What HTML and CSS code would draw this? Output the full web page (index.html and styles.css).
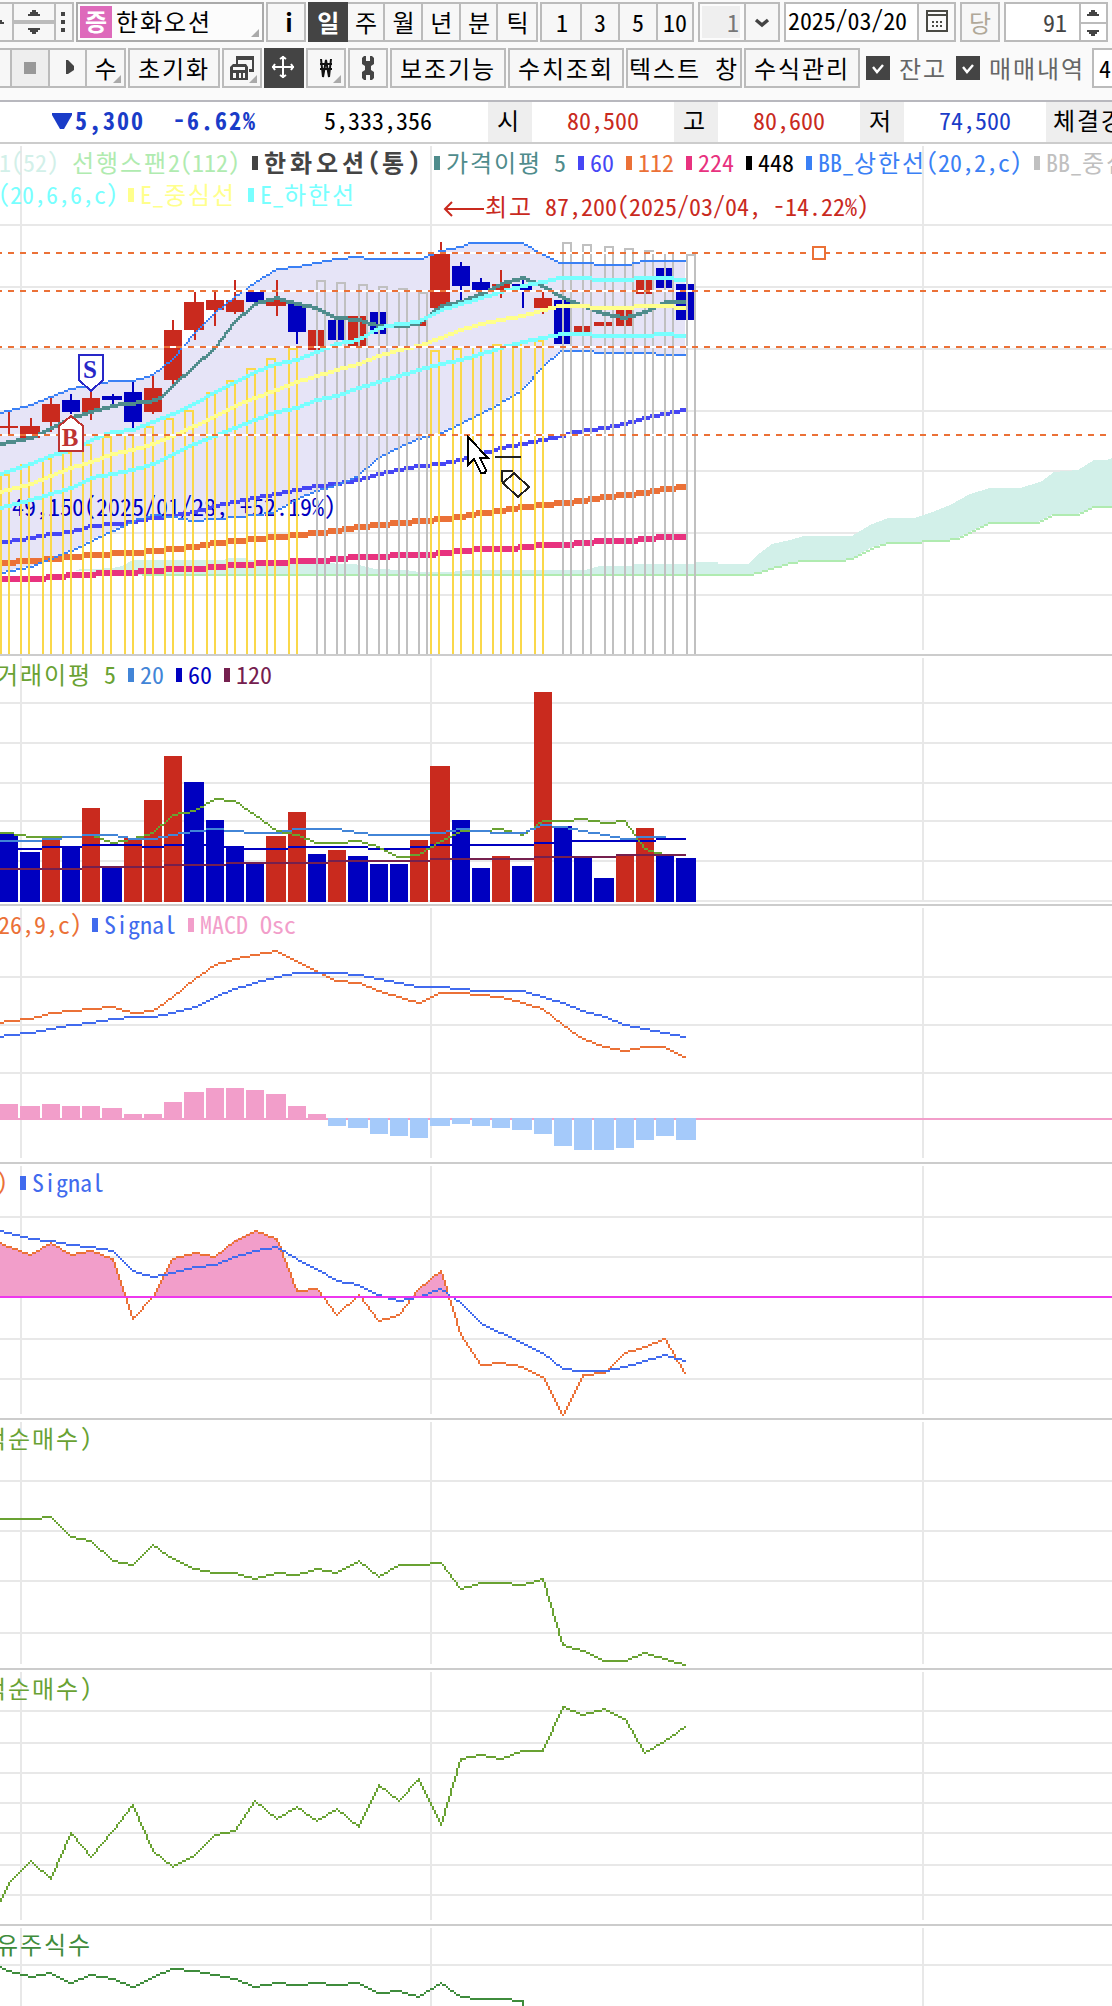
FILE: index.html
```html
<!DOCTYPE html>
<html lang="ko">
<head>
<meta charset="utf-8">
<title>한화오션 차트</title>
<link rel="stylesheet" href="styles.css">
</head>
<body>
<header class="tools">
  <div class="bar bar-top">
    <div class="group g-edge"><span class="cell"><svg width="12" height="36" viewBox="0 0 12 36"><path class="ink" d="M0 16h2v2h2v2H0z"/></svg></span></div>
    <div class="group g-spin">
      <span class="cell stack"><svg width="40" height="36" viewBox="0 0 40 36"><path class="ink" d="M14 12h12v-2h-2V8h-2V6h-4v2h-2v2h-2zM14 24h12v2h-2v2h-2v2h-4v-2h-2v-2h-2z"/><path class="rule" d="M0 16h40v4H0z"/></svg></span>
      <span class="cell dots"><svg width="18" height="36" viewBox="0 0 18 36"><path class="ink" d="M6 8h4v4H6zM6 16h4v4H6zM6 24h4v4H6z"/></svg></span>
    </div>
    <div class="box stock"><b class="badge">증</b><span class="stock-name">한화오션</span><i class="corner"></i></div>
    <div class="group w40"><span class="cell info">i</span></div>
    <div class="group periods"><span class="cell on">일</span><span class="cell">주</span><span class="cell">월</span><span class="cell">년</span><span class="cell">분</span><span class="cell">틱</span></div>
    <div class="group minutes"><span class="cell">1</span><span class="cell">3</span><span class="cell">5</span><span class="cell">10</span></div>
    <div class="box unit"><span class="unit-value">1</span><span class="drop"><svg width="32" height="36" viewBox="0 0 32 36"><path d="M10 16l6 5 6-5" fill="none" stroke="#444" stroke-width="3.4"/></svg></span></div>
    <div class="box date"><span class="date-value">2025/03/20</span><span class="cal"><svg width="38" height="36" viewBox="0 0 38 36" fill="none" stroke="#4a4a44" stroke-width="2"><path d="M8 7h20v20H8zM8 11h20"/><path d="M13 18h12M13 22h12" stroke-dasharray="2 2"/></svg></span></div>
    <div class="group w40 off"><span class="cell">당</span></div>
    <div class="box count"><span class="count-value">91</span><span class="spin"><svg width="25" height="36" viewBox="0 0 25 36"><path class="ink" d="M6 12h12v-2h-2V8h-2V6h-4v2H8v2H6zM6 26h12v2h-2v2h-2v2h-4v-2H8v-2H6z"/><path class="rule" d="M0 18h25v2H0z"/></svg></span></div>
  </div>
  <div class="bar bar-bottom">
    <div class="group g-play">
      <span class="cell c-edge"></span>
      <span class="cell c-stop"><i class="stop"></i></span>
      <span class="cell c-go"><svg width="36" height="36" viewBox="0 0 36 36"><path class="ink" d="M16 10h2l6 6v4l-6 4h-2z"/></svg></span>
      <span class="cell c-num">수<i class="corner"></i></span>
    </div>
    <button class="btn b92">초기화</button>
    <button class="btn w40"><svg width="36" height="36" viewBox="0 0 36 36"><path class="ink" fill-rule="evenodd" d="M12 6h18v16h-5v-3h3v-9H14v4h-2zM9 14h13l2 3v13H6V17zM9 17v3h12v-3zM9 23v5h3v-5zM15 23v5h2v-5zM19 23v5h2v-5z"/></svg><i class="corner"></i></button>
    <button class="btn w40 on"><svg width="36" height="36" viewBox="0 0 36 36" fill="none" stroke="#fff" stroke-width="2"><path d="M17 6v22M6 17h22M14 9l3-2 3 2M14 25l3 2 3-2M9 14l-2 3 2 3M25 14l2 3-2 3"/></svg></button>
    <button class="btn w40"><svg width="36" height="36" viewBox="0 0 36 36" fill="none" stroke="#111" stroke-width="2"><path d="M13 9l2 18 3-17 3 17 2-18M12 14h12M12 19h12"/></svg><i class="corner"></i></button>
    <button class="btn w40"><svg width="36" height="36" viewBox="0 0 36 36"><path class="ink" d="M12 8l2-2h2v5h4V6h2l2 2v6l-3 2v4l3 2v6l-2 2h-2v-5h-4v5h-2l-2-2v-6l3-2v-4l-3-2z"/></svg></button>
    <button class="btn b116">보조기능</button>
    <button class="btn b116">수치조회</button>
    <button class="btn b116">텍스트 창</button>
    <button class="btn b116">수식관리</button>
    <label class="check c1"><svg width="24" height="24" viewBox="0 0 24 24"><path d="M0 0h24v24H0z" fill="#444"/><path d="M7 11l4 5 6-7" fill="none" stroke="#fff" stroke-width="2.4"/></svg>잔고</label>
    <label class="check c2"><svg width="24" height="24" viewBox="0 0 24 24"><path d="M0 0h24v24H0z" fill="#444"/><path d="M7 11l4 5 6-7" fill="none" stroke="#fff" stroke-width="2.4"/></svg>매매내역</label>
    <div class="box last">4</div>
  </div>
</header>

<section class="quote">
  <span class="q-diff"><svg width="20" height="16" viewBox="0 0 20 16"><path d="M0 0h20v2L12 16H8L0 2z" fill="#1a3cc8"/></svg><b>5,300</b></span>
  <b class="q-rate">-6.62%</b>
  <span class="q-vol">5,333,356</span>
  <span class="q-tag">시</span><span class="q-num up">80,500</span>
  <span class="q-tag">고</span><span class="q-num up">80,600</span>
  <span class="q-tag">저</span><span class="q-num down">74,500</span>
  <span class="q-tag q-wide">체결강</span>
</section>

<main class="charts">
  <svg class="panel" id="price" viewBox="0 144 1112 510" height="510">
    <g class="plot"></g>
    <g class="legend">
      <text x="-1" y="172" fill="#d2f0e9">1(52)</text>
      <text x="72" y="172" fill="#b0ebb0">선행스팬2(112)</text>
      <rect x="252" y="156" width="6" height="14" fill="#444"/><text class="strong" x="264" y="172" fill="#444">한화오션(통)</text>
      <rect x="434" y="156" width="6" height="14" fill="#4f8c8c"/><text x="446" y="172" fill="#4f8c8c">가격이평 5</text>
      <rect x="578" y="156" width="6" height="14" fill="#4646f5"/><text x="590" y="172" fill="#4646f5">60</text>
      <rect x="626" y="156" width="6" height="14" fill="#eb7137"/><text x="638" y="172" fill="#eb7137">112</text>
      <rect x="686" y="156" width="6" height="14" fill="#e8327f"/><text x="698" y="172" fill="#e8327f">224</text>
      <rect x="746" y="156" width="6" height="14" fill="#000"/><text x="758" y="172" fill="#000">448</text>
      <rect x="806" y="156" width="6" height="14" fill="#3a80f5"/><text x="818" y="172" fill="#3a80f5">BB_상한선(20,2,c)</text>
      <rect x="1034" y="156" width="6" height="14" fill="#c0c0c0"/><text x="1046" y="172" fill="#c0c0c0">BB_중심선</text>
      <text x="-2" y="204" fill="#78ffff">(20,6,6,c)</text>
      <rect x="128" y="188" width="6" height="14" fill="#ffff8c"/><text x="140" y="204" fill="#ffff8c">E_중심선</text>
      <rect x="248" y="188" width="6" height="14" fill="#78ffff"/><text x="260" y="204" fill="#78ffff">E_하한선</text>
      <path d="M484 209H445M452 202l-7 7 7 7" fill="none" stroke="#c92a1e" stroke-width="2"/>
      <text x="485" y="216" fill="#c92a1e">최고 87,200(2025/03/04, -14.22%)</text>
    </g>
  </svg>
  <svg class="panel" id="volume" viewBox="0 656 1112 248" height="248">
    <g class="plot"></g>
    <g class="legend">
      <text x="-4" y="684" fill="#69a232">거래이평 5</text>
      <rect x="128" y="668" width="6" height="14" fill="#4285d7"/><text x="140" y="684" fill="#4285d7">20</text>
      <rect x="176" y="668" width="6" height="14" fill="#0000c0"/><text x="188" y="684" fill="#0000c0">60</text>
      <rect x="224" y="668" width="6" height="14" fill="#75204f"/><text x="236" y="684" fill="#75204f">120</text>
    </g>
  </svg>
  <svg class="panel" id="macd" viewBox="0 906 1112 256" height="256">
    <g class="plot"></g>
    <g class="legend">
      <text x="-2" y="934" fill="#eb7137">26,9,c)</text>
      <rect x="92" y="918" width="6" height="14" fill="#416bee"/><text x="104" y="934" fill="#416bee">Signal</text>
      <rect x="188" y="918" width="6" height="14" fill="#f29eca"/><text x="200" y="934" fill="#f29eca">MACD Osc</text>
    </g>
  </svg>
  <svg class="panel" id="stoch" viewBox="0 1164 1112 254" height="254">
    <g class="plot"></g>
    <g class="legend">
      <text x="-4" y="1192" fill="#eb7137">)</text>
      <rect x="20" y="1176" width="6" height="14" fill="#416bee"/><text x="32" y="1192" fill="#416bee">Signal</text>
    </g>
  </svg>
  <svg class="panel" id="netbuy1" viewBox="0 1420 1112 248" height="248">
    <g class="plot"></g>
    <g class="legend"><text x="-16" y="1448" fill="#69a232">적순매수)</text></g>
  </svg>
  <svg class="panel" id="netbuy2" viewBox="0 1670 1112 254" height="254">
    <g class="plot"></g>
    <g class="legend"><text x="-16" y="1698" fill="#69a232">적순매수)</text></g>
  </svg>
  <svg class="panel" id="shares" viewBox="0 1926 1112 80" height="80">
    <g class="plot"></g>
    <g class="legend"><text x="-4" y="1954" fill="#3f8c3c">유주식수</text></g>
  </svg>
</main>
<script src="chart.js"></script>
</body>
</html>
```
FILE: styles.css
```css
* { box-sizing: border-box; }
body {
  margin: 0;
  width: 1112px;
  height: 2006px;
  overflow: hidden;
  background: #fff;
  color: #000;
  font: 24px/1 "Noto Sans Mono CJK KR", "Noto Sans CJK KR", monospace;
}
svg { display: block; flex: none; }
.ink { fill: #444; }
.rule { fill: #bbb; }

/* toolbars */
.tools { height: 102px; padding-top: 2px; background: #fafafa; border-bottom: 2px solid #b8b8be; }
.bar { display: flex; height: 40px; white-space: nowrap; }
.bar-bottom { margin-top: 6px; gap: 2px; }
.group, .box, .btn { flex: none; display: flex; height: 40px; background: #f7f7f7; border: 2px solid #bbb; }
.cell { display: flex; align-items: center; justify-content: center; position: relative; border-right: 2px solid #bbb; }
.cell:last-child { border-right: 0; }
.g-edge { width: 14px; border-left: 0; }
.g-edge .cell { width: 12px; }
.g-spin { width: 60px; border-left: 0; margin-right: 2px; }
.stack { width: 42px; }
.dots { width: 16px; }
.box { background: #fcfcfc; align-items: center; position: relative; }
.stock { width: 188px; border-color: #aaa; margin-right: 2px; padding-left: 2px; }
.badge { width: 32px; height: 32px; line-height: 30px; text-align: center; background: #de6abb; color: #fff; }
.stock-name { margin-left: 4px; line-height: 32px; padding-bottom: 2px; letter-spacing: 1.92px; }
.corner { position: absolute; right: 3px; bottom: 3px; border: 4px solid transparent; border-right-color: #aaa; border-bottom-color: #aaa; }
.w40 { width: 40px; }
.w40 .cell { width: 36px; }
.bar-top .w40 { margin-right: 2px; }
.info { font-weight: 700; padding-left: 6px; }
.periods { width: 230px; margin-right: 2px; border-left: 0; }
.periods .cell { width: 38px; padding-left: 1px; }
.periods .on { width: 40px; height: 40px; margin-top: -2px; background: #444; color: #fff; font-weight: 700; border-right: 0; }
.minutes { width: 154px; margin-right: 4px; padding-left: 2px; }
.minutes .cell { width: 38px; flex: none; }
.minutes .cell:last-child { width: 34px; }
.unit { width: 82px; margin-right: 4px; padding-left: 2px; }
.unit-value { width: 40px; height: 32px; line-height: 32px; background: #efefef; color: #777; text-align: right; padding-right: 1px; margin-right: 4px; }
.drop { border-left: 2px solid #bbb; background: #f7f7f7; }
.date { width: 172px; margin-right: 4px; background: #fff; }
.date-value { width: 131px; padding-left: 2px; padding-bottom: 4px; letter-spacing: -.1px; }
.cal { border-left: 2px solid #bbb; background: #fafafa; width: 37px; overflow: hidden; }
.bar-top .off { margin-right: 4px; color: #b0a898; }
.count { width: 104px; background: #fff; color: #444; }
.count-value { width: 75px; padding-right: 12px; text-align: right; }
.spin { border-left: 2px solid #bbb; }

.g-play { width: 126px; border-left: 0; }
.c-edge { width: 12px; }
.c-stop { width: 38px; background: #eee; }
.c-go { width: 37px; }
.c-num { width: 37px; }
.stop { width: 12px; height: 12px; background: #999; }
.btn { padding: 0; font: inherit; letter-spacing: 1.92px; color: #000; align-items: center; justify-content: center; position: relative; border-radius: 0; }
.btn.on { background: #444; border-color: #444; }
.b92 { width: 92px; }
.b116 { width: 116px; }
.check { flex: none; display: flex; align-items: center; gap: 9px; height: 40px; color: #666; letter-spacing: 1.92px; }
.c1 { width: 88px; margin-left: 4px; }
.c2 { width: 134px; }
.last { width: 40px; padding-left: 5px; background: #fff; }

/* quote line */
.quote { display: flex; height: 42px; border-bottom: 2px solid #ccc; line-height: 36px; white-space: nowrap; overflow: hidden; }
.quote > * { flex: none; }
.q-diff, .q-rate { color: #1a3cc8; letter-spacing: 2px; }
.q-diff { width: 173px; padding-left: 52px; display: flex; gap: 3px; }
.q-diff svg { margin-top: 11px; }
.q-rate { width: 151px; }
.q-vol { width: 164px; }
.q-tag { width: 44px; height: 40px; padding-right: 4px; text-align: center; background: #eee; }
.q-num { width: 142px; padding-right: 35px; text-align: right; }
.q-wide { width: 100px; padding-left: 7px; text-align: left; letter-spacing: 1.92px; }
.up { color: #c92a1e; }
.down { color: #1a3cc8; }

/* charts */
.panel { width: 1112px; border-bottom: 2px solid #ccc; box-sizing: content-box; }
.panel:last-child { border-bottom: 0; }
.plot { shape-rendering: crispEdges; }
.legend text, .note { white-space: pre; }
.ko { letter-spacing: 1.92px; }
.strong { font-weight: 700; letter-spacing: 2px; }
.strong .ko { letter-spacing: 3.92px; }
.mark { font: 700 25px "Liberation Serif", serif; text-anchor: middle; }
```
FILE: chart.js
```js
const RED = '#c92a1e', NAVY = '#0000c0', ORANGE = '#eb7137', GREEN = '#69a232';
const left = [-2, 20, 42, 62, 82, 102, 124, 144, 164, 184, 206, 226, 246, 266, 288, 308, 328, 348, 370, 390, 410, 430,
  452, 472, 492, 512, 534, 554, 574, 594, 616, 636, 656, 676, 698];
const barW = i => left[i + 1] - left[i] - 2;
const mid = i => i === 0 ? 9 : left[i] + (barW(i) === 20 ? 11 : 9);

const rect = (x, y, w, h, c) => `<rect x="${x}" y="${y}" width="${w}" height="${h}" fill="${c}"/>`;

// Polyline rasterised on a 2px grid, t = stroke height in px
function line(pts, color, t = 2) {
  let d = '';
  for (let k = 0; k < pts.length - 1; k++) {
    let x = Math.floor(pts[k][0] / 2), y = Math.floor(pts[k][1] / 2);
    const x1 = Math.floor(pts[k + 1][0] / 2), y1 = Math.floor(pts[k + 1][1] / 2);
    const n = Math.max(Math.abs(x1 - x), Math.abs(y1 - y), 1);
    for (let s = 0; s <= n; s++) {
      const px = Math.round(x + (x1 - x) * s / n) * 2, py = Math.round(y + (y1 - y) * s / n) * 2;
      d += `M${px} ${py - (t >= 4 ? 2 : 0)}h2v${t}h-2z`;
    }
  }
  return `<path d="${d}" fill="${color}"/>`;
}
const series = (ys, start) => [[-11, start]].concat(ys.map((y, i) => [Math.min(mid(i), 685), y]));
const poly = (pts, color) => `<polygon points="${pts.map(p => p.join(',')).join(' ')}" fill="${color}"/>`;

function grid(ys, top, bottom) {
  return ys.map(y => rect(0, y - 1, 1112, 2, '#e8e8e8')).join('') +
    [20, 430, 922].map(x => rect(x, top, 2, bottom - top, '#e8e8e8')).join('');
}
const put = (id, html) => { document.querySelector('#' + id + ' .plot').innerHTML = html; };

document.querySelectorAll('.legend text').forEach(t => {
  t.innerHTML = t.textContent.replace(/[가-힣]+/g, '<tspan class="ko">$&</tspan>');
});

/* ---------- price ---------- */
const upper = [[0, 413], [31, 404], [51, 396], [71, 388], [91, 384], [113, 381], [133, 381], [153, 375], [173, 358],
  [195, 332], [215, 312], [235, 296], [255, 283], [277, 269], [297, 266], [317, 263], [337, 259], [359, 257], [371, 259],
  [421, 259], [441, 251], [461, 246], [471, 243], [523, 243], [543, 254], [561, 263], [591, 263], [597, 265], [627, 265],
  [643, 261], [685, 261]];
const lower = [[0, 572], [31, 566], [51, 559], [71, 551], [91, 540], [113, 530], [133, 521], [153, 515], [173, 516],
  [193, 521], [215, 519], [235, 517], [255, 515], [273, 512], [297, 499], [317, 490], [337, 484], [357, 476], [379, 457],
  [399, 447], [419, 438], [441, 432], [461, 423], [481, 413], [501, 402], [521, 390], [543, 366], [561, 351], [591, 351],
  [597, 353], [655, 353], [658, 355], [685, 355]];
const ma5 = [[0, 444], [31, 438], [51, 428], [71, 418], [91, 412], [113, 407], [123, 404], [148, 402], [160, 398],
  [173, 387], [195, 367], [215, 348], [235, 322], [255, 305], [277, 299], [297, 304], [317, 309], [337, 318], [359, 320],
  [379, 327], [399, 326], [419, 325], [441, 307], [461, 302], [481, 294], [501, 284], [523, 278], [543, 287], [563, 299],
  [583, 307], [605, 314], [625, 318], [645, 313], [665, 302], [685, 302]];
const envTop = [[0, 474], [31, 465], [51, 457], [71, 450], [91, 440], [113, 432], [133, 430], [153, 423], [173, 415],
  [195, 404], [215, 393], [235, 382], [255, 373], [277, 365], [297, 360], [317, 352], [337, 345], [359, 340], [379, 329],
  [399, 325], [419, 322], [441, 310], [461, 305], [481, 299], [501, 293], [523, 287], [543, 282], [560, 278], [591, 278],
  [594, 280], [631, 280], [637, 278], [672, 278], [676, 280], [685, 280]];
const envMid = [[0, 492], [31, 484], [51, 476], [71, 469], [91, 462], [113, 455], [133, 451], [153, 444], [173, 437],
  [195, 426], [215, 417], [235, 407], [255, 399], [277, 390], [297, 382], [317, 376], [337, 370], [359, 365], [379, 357],
  [399, 351], [419, 347], [441, 338], [461, 331], [481, 325], [501, 320], [523, 316], [543, 310], [560, 306], [589, 306],
  [592, 308], [630, 308], [634, 306], [672, 306], [676, 308], [685, 308]];
const envLow = [[0, 508], [31, 500], [51, 495], [71, 488], [91, 479], [113, 475], [133, 470], [153, 464], [173, 455],
  [195, 445], [215, 437], [235, 428], [255, 420], [277, 412], [297, 408], [317, 401], [337, 396], [359, 389], [379, 382],
  [399, 377], [419, 371], [441, 364], [461, 360], [481, 354], [501, 349], [523, 343], [543, 338], [563, 334], [590, 334],
  [594, 336], [650, 336], [656, 334], [672, 334], [676, 336], [685, 336]];
const ma60 = [[0, 542], [20, 541], [51, 535], [71, 532], [91, 527], [113, 524], [133, 522], [153, 519], [173, 516],
  [195, 512], [215, 506], [235, 502], [255, 499], [277, 495], [297, 491], [317, 487], [337, 484], [359, 480], [379, 474],
  [399, 470], [419, 467], [441, 464], [461, 460], [481, 454], [501, 449], [523, 444], [543, 440], [563, 437], [573, 433],
  [605, 429], [625, 424], [645, 419], [665, 415], [685, 410]];
const ma112 = [[0, 563], [31, 561], [51, 558], [71, 557], [91, 554], [133, 553], [153, 551], [173, 549], [195, 547],
  [215, 543], [235, 540], [255, 539], [277, 537], [297, 535], [317, 533], [337, 531], [359, 527], [379, 525], [399, 523],
  [425, 521], [441, 519], [461, 516], [481, 513], [501, 510], [523, 507], [543, 505], [563, 503], [583, 501], [605, 497],
  [625, 495], [645, 493], [665, 489], [685, 487]];
const ma224 = [[0, 579], [31, 578], [58, 577], [71, 575], [120, 573], [153, 571], [173, 569], [200, 569], [215, 567],
  [235, 565], [277, 563], [297, 561], [320, 561], [337, 559], [359, 557], [383, 557], [395, 555], [428, 555], [441, 553],
  [461, 551], [481, 549], [511, 549], [523, 547], [543, 545], [565, 545], [583, 543], [605, 541], [630, 541], [645, 539],
  [665, 537], [685, 537]];
const cloudTop = [[68, 570], [113, 568], [122, 566], [133, 560], [224, 560], [226, 558], [246, 558], [248, 560], [300, 560],
  [340, 564], [355, 564], [375, 569], [405, 570], [420, 572], [450, 572], [470, 570], [585, 570], [600, 566], [632, 566],
  [634, 564], [695, 564], [696, 562], [718, 562], [718, 564], [748, 564], [760, 553], [772, 544], [790, 540], [804, 536],
  [852, 536], [870, 525], [888, 518], [914, 518], [930, 513], [950, 505], [970, 494], [990, 488], [1020, 488], [1030, 485],
  [1042, 481], [1054, 472], [1078, 470], [1094, 460], [1106, 460], [1112, 458]];
const cloudLow = [[143, 575], [750, 575], [770, 569], [790, 563], [804, 561], [838, 561], [852, 559], [870, 548],
  [888, 543], [920, 543], [922, 541], [942, 541], [956, 539], [976, 529], [990, 523], [1036, 523], [1052, 515],
  [1076, 515], [1094, 507], [1112, 507]];
// colour, body top, body bottom, wick top, wick bottom
const candles = [['r', 426, 428, 410, 434], ['r', 426, 438, 418, 438], ['r', 404, 422, 396, 432], ['b', 400, 412, 394, 414],
  ['r', 398, 412, 392, 420], ['b', 396, 400, 394, 404], ['b', 392, 422, 382, 428], ['r', 388, 412, 376, 414],
  ['r', 330, 380, 320, 384], ['r', 302, 330, 292, 340], ['r', 300, 310, 292, 326], ['r', 300, 312, 280, 314],
  ['b', 292, 302, 292, 304], ['r', 298, 306, 280, 316], ['b', 304, 332, 304, 344], ['r', 330, 350, 330, 350],
  ['b', 320, 340, 320, 340], ['r', 316, 346, 316, 346], ['b', 312, 334, 312, 334], ['r', 324, 326, 324, 326],
  ['r', 322, 326, 322, 326], ['r', 254, 308, 242, 308], ['b', 266, 286, 262, 300], ['b', 282, 290, 278, 298],
  ['r', 284, 290, 270, 298], ['b', 284, 290, 280, 308], ['r', 298, 308, 292, 314], ['b', 300, 344, 300, 344],
  ['r', 326, 332, 326, 332], ['r', 322, 326, 322, 326], ['r', 310, 326, 310, 326], ['r', 280, 294, 280, 294],
  ['b', 268, 288, 268, 288], ['b', 284, 320, 284, 320]];
const columns = [474, 464, 458, 452, 444, 436, 434, 426, 418, 410, 392, 380, 368, 358, 348, 280, 282, 284, 286, 288, 292,
  350, 348, 346, 344, 342, 340, 242, 244, 246, 248, 250, 252, 254];

let s = grid([225, 287, 349, 411, 471, 533, 595], 146, 650);
s += poly(cloudTop.concat(cloudLow.slice().reverse()), '#d2f0e9') + line(cloudLow, '#b0ebb0');
s += poly(upper.concat(lower.slice().reverse()), '#e6e4f7');
s += `<text class="note" x="12" y="516" fill="${NAVY}">49,150(2025/01/28, +52.19%)</text>`;
s += line(ma224, '#e8327f', 6) + line(ma112, ORANGE, 6) + line(ma60, '#4646f5', 4) + line(lower, '#3a80f5');
candles.forEach(([c, t, b, wt, wb], i) => {
  const col = c === 'r' ? RED : NAVY;
  s += rect(left[i], t, barW(i), b - t, col) + rect(mid(i) - 1, wt, 2, wb - wt, col);
});
columns.forEach((t, i) => {
  const grey = (i > 14 && i < 21) || i > 26;
  const x = grey ? mid(i) : left[i] + (i ? 1 : 3), c = grey ? '#c0c0c0' : '#fad84a';
  s += rect(x - 1, t, 2, 654 - t, c) + rect(x + 7, t, 2, 654 - t, c) + rect(x - 1, t, 10, 2, c);
});
s += line(upper, '#3a80f5') + line(ma5, '#4f8c8c', 4) + line(envTop, '#78ffff', 4) +
  line(envLow, '#78ffff', 4) + line(envMid, '#ffff8c', 4);
[252, 290, 346, 434].forEach(y => {
  s += rect(0, y, 698, 2, '#fff');
  for (let x = -4; x < 1106; x += 12) s += rect(x, y, 6, 2, ORANGE);
});
s += `<rect x="813" y="247" width="12" height="12" fill="#fff" stroke="${ORANGE}" stroke-width="2"/>`;
s += `<path d="M79 355h24v25L91 391 79 380z" fill="#fff" stroke="#2828c8" stroke-width="2"/><text class="mark" x="90" y="378" fill="#2828c8">S</text>`;
s += `<path d="M59 451h24v-25L71 416 59 426z" fill="#fff" stroke="#be3432" stroke-width="2"/><text class="mark" x="70" y="446" fill="#be3432">B</text>`;
s += `<path d="M468 437v28l6-6 7 14h4l1-3-6-12h8z" fill="#fff" stroke="#000" stroke-width="2"/>`;
s += `<path d="M495 457h26M502 482v-11h11M514 473l15 14-11 10-15-14z" fill="none" stroke="#222" stroke-width="2"/>`;
put('price', s);

/* ---------- volume ---------- */
const volTop = [834, 852, 840, 846, 808, 868, 838, 800, 756, 782, 820, 846, 864, 836, 812, 854, 850, 856, 864, 864, 840,
  766, 820, 868, 856, 866, 692, 826, 858, 878, 856, 828, 856, 858];
const volCol = 'bbrbrbrrrbbbbrrbrbbbrrbbrbrbbbrrbb';
s = grid([703, 743, 783, 821, 861, 901], 658, 902);
volTop.forEach((t, i) => { s += rect(left[i], t, barW(i), 902 - t, volCol[i] === 'r' ? RED : NAVY); });
s += line(series([849, 849, 847, 847, 845, 845, 845, 847, 845, 845, 845, 847, 849, 849, 847, 847, 847, 847, 849, 849, 847,
  845, 845, 845, 845, 845, 843, 841, 841, 841, 841, 841, 839, 839], 849), NAVY);
s += line(series([833, 837, 837, 837, 835, 843, 839, 833, 814, 810, 799, 801, 815, 830, 834, 843, 843, 841, 847, 857, 854,
  841, 831, 831, 829, 835, 821, 821, 819, 823, 821, 848, 854], 835), GREEN);
s += line(series([841, 841, 839, 837, 835, 835, 839, 839, 835, 831, 829, 831, 833, 833, 829, 829, 829, 832, 835, 835, 835,
  832, 829, 831, 833, 833, 825, 827, 831, 835, 839, 837, 837], 841), '#4285d7');
s += line(series([869, 869, 869, 869, 867, 867, 867, 867, 865, 865, 865, 863, 863, 863, 863, 863, 861, 861, 861, 861, 861,
  859, 859, 859, 859, 859, 857, 857, 857, 857, 855, 855, 855, 855], 869), '#75204f');
put('volume', s);

/* ---------- MACD ---------- */
const osc = [1104, 1106, 1104, 1106, 1106, 1108, 1114, 1114, 1102, 1092, 1088, 1088, 1090, 1094, 1106, 1114, 1126, 1128,
  1134, 1136, 1138, 1126, 1124, 1126, 1128, 1130, 1134, 1146, 1150, 1150, 1148, 1140, 1136, 1140];
s = grid([977, 1025, 1073], 908, 1158) + rect(0, 1118, 1112, 2, '#f29eca');
osc.forEach((v, i) => {
  s += v < 1118 ? rect(left[i], v, barW(i), 1120 - v, '#f29eca') : rect(left[i], 1118, barW(i), v - 1118, '#a5cafa');
});
s += line(series([1021, 1019, 1013, 1011, 1009, 1007, 1013, 1010, 997, 979, 965, 959, 955, 951, 961, 970, 980, 983, 991,
  997, 1003, 993, 993, 995, 997, 1002, 1008, 1025, 1038, 1047, 1051, 1047, 1047, 1057], 1025), ORANGE);
s += line(series([1035, 1033, 1029, 1025, 1022, 1019, 1017, 1017, 1013, 1006, 997, 989, 983, 977, 973, 973, 973, 975, 979,
  982, 987, 987, 988, 990, 991, 991, 997, 1003, 1011, 1017, 1024, 1029, 1033, 1037], 1039), '#416bee');
put('macd', s);

/* ---------- stochastic ---------- */
const slowK = series([1247, 1255, 1243, 1255, 1251, 1259, 1319, 1297, 1259, 1253, 1257, 1240, 1231, 1239, 1291, 1289, 1315,
  1295, 1321, 1315, 1288, 1271, 1335, 1365, 1363, 1366, 1377, 1415, 1375, 1372, 1353, 1347, 1339, 1373], 1238);
s = grid([1217, 1257, 1339, 1379], 1166, 1414);
s += '<clipPath id="above"><rect x="0" y="1166" width="1112" height="131"/></clipPath>';
s += `<g clip-path="url(#above)">${poly([[-11, 1297]].concat(slowK, [[687, 1297]]), '#f29eca')}</g>`;
s += line(slowK, ORANGE) + line(series([1233, 1239, 1241, 1244, 1247, 1250, 1271, 1277, 1273, 1267, 1265, 1257, 1251, 1247,
  1258, 1268, 1281, 1285, 1295, 1301, 1297, 1289, 1303, 1322, 1333, 1342, 1353, 1369, 1371, 1371, 1367, 1361, 1355, 1361],
  1229), '#416bee') + rect(0, 1296, 1112, 2, '#ee37ee');
put('stoch', s);

/* ---------- net buying, shares held ---------- */
put('netbuy1', grid([1481, 1531, 1581, 1633], 1422, 1664) + line(series([1519, 1519, 1517, 1536, 1541, 1560, 1565, 1545,
  1558, 1569, 1573, 1573, 1579, 1573, 1575, 1569, 1573, 1561, 1577, 1565, 1565, 1563, 1589, 1583, 1583, 1585, 1579, 1645,
  1651, 1661, 1661, 1653, 1659, 1665], 1517), GREEN));
put('netbuy2', grid([1711, 1743, 1773, 1803, 1833, 1865, 1895], 1672, 1920) + line(series([1883, 1861, 1879, 1833, 1857,
  1831, 1805, 1850, 1867, 1854, 1835, 1831, 1801, 1818, 1807, 1821, 1809, 1827, 1785, 1801, 1779, 1825, 1759, 1755, 1759,
  1751, 1751, 1707, 1715, 1709, 1718, 1753, 1741, 1727], 1922), GREEN));
put('shares', grid([1965], 1928, 2006) + line(series([1971, 1977, 1973, 1983, 1975, 1979, 1987, 1977, 1969, 1971, 1975,
  1979, 1987, 1983, 1985, 1983, 1985, 1983, 1993, 1991, 1997, 1983, 1997, 1999, 1999, 2001], 1961).concat([[523, 2006]]),
  '#3f8c3c'));
```
